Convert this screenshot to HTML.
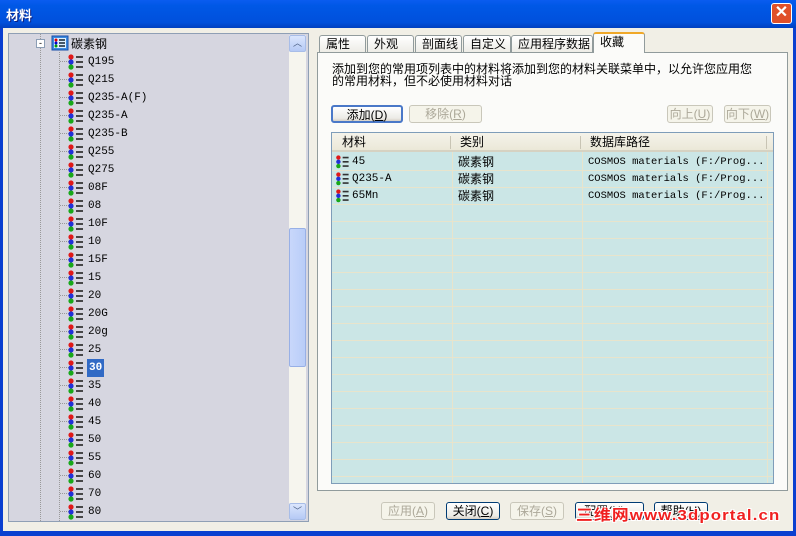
<!DOCTYPE html>
<html><head><meta charset="utf-8"><style>
*{margin:0;padding:0;box-sizing:border-box}
body{width:796px;height:536px;overflow:hidden;background:#0a3fd0;font-family:"Liberation Sans","Noto Sans CJK SC",sans-serif;font-size:12px;position:relative}
.abs{position:absolute}
#title{left:0;top:0;width:796px;height:28px;background:linear-gradient(#0a5cf0,#0058e6 20%,#0050dc 80%,#0040c0);}
#title span{position:absolute;left:6px;top:5px;color:#fff;font-weight:bold;font-size:13px;text-shadow:1px 1px #0a1e80}
#close{left:771px;top:3px;width:21px;height:21px;background:#e0502a;border:1px solid #fff;border-radius:3px;color:#fff;font-size:16px;font-weight:bold;text-align:center;line-height:18px}
#body{left:3px;top:28px;width:790px;height:503px;background:#f1efe6}
#tree{left:8px;top:33px;width:301px;height:489px;background:#d6d6e0;border:1px solid #8f9fb5;overflow:hidden}
.row{position:absolute;height:18px;font-family:"Liberation Mono","Noto Sans CJK SC",monospace;font-size:11px;line-height:18px}
.ico{position:absolute;width:17px;height:16px}
.vl{position:absolute;border-left:1px dotted #999;width:0}
.hl{position:absolute;border-top:1px dotted #999;height:0;width:9px}
#sb{left:289px;top:35px;width:17px;height:485px;background:#f6f5ee}
.sbtn{position:absolute;left:0;width:17px;height:17px;background:linear-gradient(#dbe6fd,#b5c9f5);border:1px solid #a8bde8;border-radius:2px;color:#4d6185;font-size:9px;text-align:center;line-height:15px}
#thumb{position:absolute;left:0;top:193px;width:17px;height:139px;background:linear-gradient(90deg,#c8d7fb,#b9cdf8);border:1px solid #98b0e6;border-radius:2px}
.tab{position:absolute;top:35px;height:18px;background:linear-gradient(#fff,#ecebe5);border:1px solid #919b9c;border-bottom:none;font-size:12px;line-height:17px;padding-left:6px;border-radius:3px 3px 0 0}
#panel{left:317px;top:52px;width:471px;height:439px;background:#fbfbf9;border:1px solid #919b9c}
.btn{position:absolute;height:18px;border:1px solid #003c74;border-radius:3px;background:linear-gradient(#fff,#ecebe6 80%,#d6d0c5);font-size:12px;line-height:16px;text-align:center}
.dis{border-color:#c9c7ba;color:#aca899;background:#f5f4ea}
#list{left:331px;top:132px;width:443px;height:352px;background:#cbe6e6;border:1px solid #7f9db9;overflow:hidden}
#hdr{position:absolute;left:0;top:0;width:441px;height:19px;background:linear-gradient(#f5f3ea,#ebe8d8);border-bottom:2px solid #d6d2c2;font-size:12px;line-height:18px}
.lr{position:absolute;left:0;width:441px;height:17px;border-bottom:1px solid #e8e4cc;font-size:11px;line-height:16px}
.cv{position:absolute;top:19px;bottom:0;border-left:1px solid #e8e4cc}
</style></head><body>
<div id="title" class="abs"><span>材料</span></div>
<div id="close" class="abs">✕</div>
<div id="body" class="abs"></div>
<div id="tree" class="abs">
<div class="vl" style="left:31px;top:0;height:489px"></div>
<div class="vl" style="left:50px;top:18px;height:471px"></div>
<div class="abs" style="left:27px;top:5px;width:9px;height:9px;border:1px solid #8c9eb5;background:#fff;font-size:9px;line-height:6px;text-align:center">-</div>
<svg class="abs" style="left:42px;top:1px" width="18" height="16"><rect x="1" y="1" width="16" height="14" fill="#3b8ae0" stroke="#1a4fa8"/><rect x="3" y="3" width="12" height="10" fill="#dff0ff"/><circle cx="5" cy="5" r="1.5" fill="#d00"/><circle cx="5" cy="8" r="1.5" fill="#00c"/><circle cx="5" cy="11" r="1.5" fill="#090"/><path d="M8 5h6M8 8h6M8 11h6" stroke="#123" stroke-width="1.4"/></svg>
<div class="row" style="left:62px;top:1px;font-family:'Liberation Sans','Noto Sans CJK SC',sans-serif;font-size:12px">碳素钢</div>
<div id="rows"></div>
</div>
<div id="sb" class="abs"><div class="sbtn" style="top:0">︿</div><div id="thumb"></div><div class="sbtn" style="top:468px">﹀</div></div>

<div class="tab" style="left:319px;width:47px">属性</div>
<div class="tab" style="left:367px;width:47px">外观</div>
<div class="tab" style="left:415px;width:47px">剖面线</div>
<div class="tab" style="left:463px;width:48px">自定义</div>
<div class="tab" style="left:511px;width:82px">应用程序数据</div>
<div id="panel" class="abs"></div>
<div class="tab" style="left:593px;top:32px;height:21px;width:52px;background:#fbfbf9;border-top:2px solid #f0a828;z-index:2">收藏</div>
<div class="abs" style="left:332px;top:63px;font-size:12px;line-height:12px;width:440px">添加到您的常用项列表中的材料将添加到您的材料关联菜单中，以允许您应用您<br>的常用材料，但不必使用材料对话</div>
<div class="btn" style="left:331px;top:105px;width:72px;border:2px solid #4a78c8">添加(<u>D</u>)</div>
<div class="btn dis" style="left:409px;top:105px;width:73px">移除(<u>R</u>)</div>
<div class="btn dis" style="left:667px;top:105px;width:46px">向上(<u>U</u>)</div>
<div class="btn dis" style="left:724px;top:105px;width:47px">向下(<u>W</u>)</div>
<div id="list" class="abs">
<div id="hdr"><span class="abs" style="left:10px">材料</span><span class="abs" style="left:128px">类别</span><span class="abs" style="left:258px">数据库路径</span>
<span class="abs" style="left:118px;top:3px;height:13px;border-left:1px solid #c8c4b4"></span><span class="abs" style="left:248px;top:3px;height:13px;border-left:1px solid #c8c4b4"></span><span class="abs" style="left:434px;top:3px;height:13px;border-left:1px solid #c8c4b4"></span></div>
<div id="lrows"></div>
<div class="cv" style="left:120px"></div><div class="cv" style="left:250px"></div><div class="cv" style="left:435px"></div>
</div>
<div class="btn dis" style="left:381px;top:502px;width:54px">应用(<u>A</u>)</div>
<div class="btn" style="left:446px;top:502px;width:54px">关闭(<u>C</u>)</div>
<div class="btn dis" style="left:510px;top:502px;width:54px">保存(<u>S</u>)</div>
<div class="btn" style="left:575px;top:502px;width:69px">配置(<u>N</u>)...</div>
<div class="btn" style="left:654px;top:502px;width:54px">帮助(<u>H</u>)</div>
<div class="abs" style="left:576px;top:508px;color:#f02020;font-weight:bold;font-size:15px;letter-spacing:1px;line-height:16px;transform:scaleX(1.12);transform-origin:0 0;text-shadow:1px 1px #fff,-1px -1px #fff,1px -1px #fff,-1px 1px #fff">三维网www.3dportal.cn</div>
<script>
var ico='<svg class="ico" viewBox="0 0 17 16"><circle cx="4" cy="3" r="2.6" fill="#e01818"/><circle cx="4" cy="8" r="2.6" fill="#2030d8"/><circle cx="4" cy="13" r="2.6" fill="#18a818"/><path d="M9 3h7M9 8h7M9 13h7" stroke="#333" stroke-width="1.8"/></svg>';
var it="Q195 Q215 Q235-A(F) Q235-A Q235-B Q255 Q275 08F 08 10F 10 15F 15 20 20G 20g 25 30 35 40 45 50 55 60 70 80".split(" ");
var h="";it.forEach(function(t,i){var y=19+i*18;h+='<div class="hl" style="left:51px;top:'+(y+8)+'px"></div><div style="position:absolute;left:58px;top:'+(y+1)+'px">'+ico+'</div><div class="row" style="left:79px;top:'+y+'px;'+(t=="30"?'background:#316ac5;color:#fff;font-weight:bold;padding:0 2px;left:78px;':'')+'">'+t+'</div>';});
document.getElementById("rows").innerHTML=h;
var d=[["45"],["Q235-A"],["65Mn"]];var l="";
for(var i=0;i<19;i++){var y=21+i*17;l+='<div class="lr" style="top:'+y+'px">';if(i<3){l+='<div style="position:absolute;left:3px;top:1px;transform:scale(.85)">'+ico+'</div><span class="abs" style="left:20px;font-family:Liberation Mono,monospace">'+d[i][0]+'</span><span class="abs" style="left:126px;font-size:12px">碳素钢</span><span class="abs" style="left:256px;font-family:Liberation Mono,monospace;font-size:10.5px">COSMOS materials (F:/Prog...</span>';}l+='</div>';}
document.getElementById("lrows").innerHTML=l;
</script>
</body></html>
